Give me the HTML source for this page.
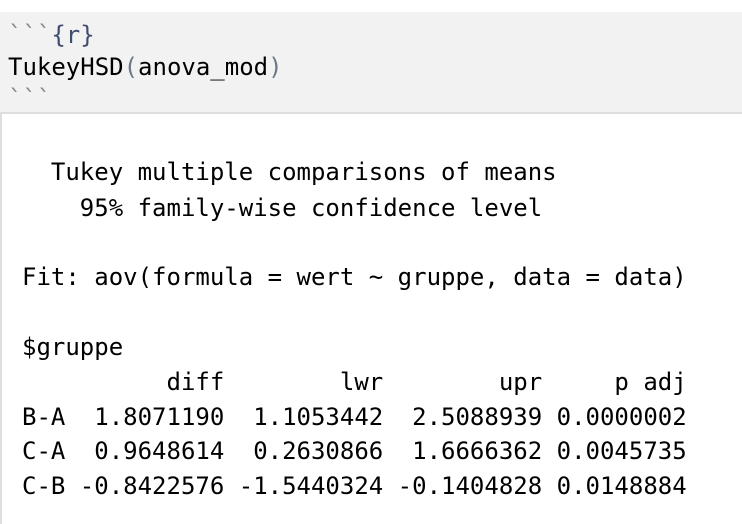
<!DOCTYPE html>
<html><head><meta charset="utf-8"><style>
html,body{margin:0;padding:0;background:#fff;width:742px;height:524px;overflow:hidden}
body{font-family:"DejaVu Sans Mono","Liberation Mono",monospace;font-size:24px;color:#000}
.code{position:absolute;left:0;top:12px;width:742px;height:102px;background:#f2f2f2;border-bottom:2px solid #dedede;box-sizing:border-box}
.out{position:absolute;left:0;top:114px;width:742px;height:410px;border-left:2px solid #dedede;box-sizing:border-box}
.l{position:absolute;margin:0;white-space:pre;line-height:30px}
.g{color:#8a8a8a}.b{color:#3f4e6e}.p{color:#6d7787}
</style></head><body>
<div class="code"></div>
<div class="out"></div>
<div class="l" style="left:8px;top:20px"><span class="g">&#96;&#96;&#96;</span><span class="b">{r}</span></div>
<div class="l" style="left:8px;top:52px">TukeyHSD<span class="p">(</span>anova_mod<span class="p">)</span></div>
<div class="l" style="left:8px;top:84px"><span class="g">&#96;&#96;&#96;</span></div>
<div class="l" style="left:22px;top:157px">  Tukey multiple comparisons of means</div>
<div class="l" style="left:22px;top:193px">    95% family-wise confidence level</div>
<div class="l" style="left:22px;top:262px">Fit: aov(formula = wert ~ gruppe, data = data)</div>
<div class="l" style="left:22px;top:332px">$gruppe</div>
<div class="l" style="left:22px;top:367px">          diff        lwr        upr     p adj</div>
<div class="l" style="left:22px;top:402px">B-A  1.8071190  1.1053442  2.5088939 0.0000002</div>
<div class="l" style="left:22px;top:436px">C-A  0.9648614  0.2630866  1.6666362 0.0045735</div>
<div class="l" style="left:22px;top:471px">C-B -0.8422576 -1.5440324 -0.1404828 0.0148884</div>
</body></html>
